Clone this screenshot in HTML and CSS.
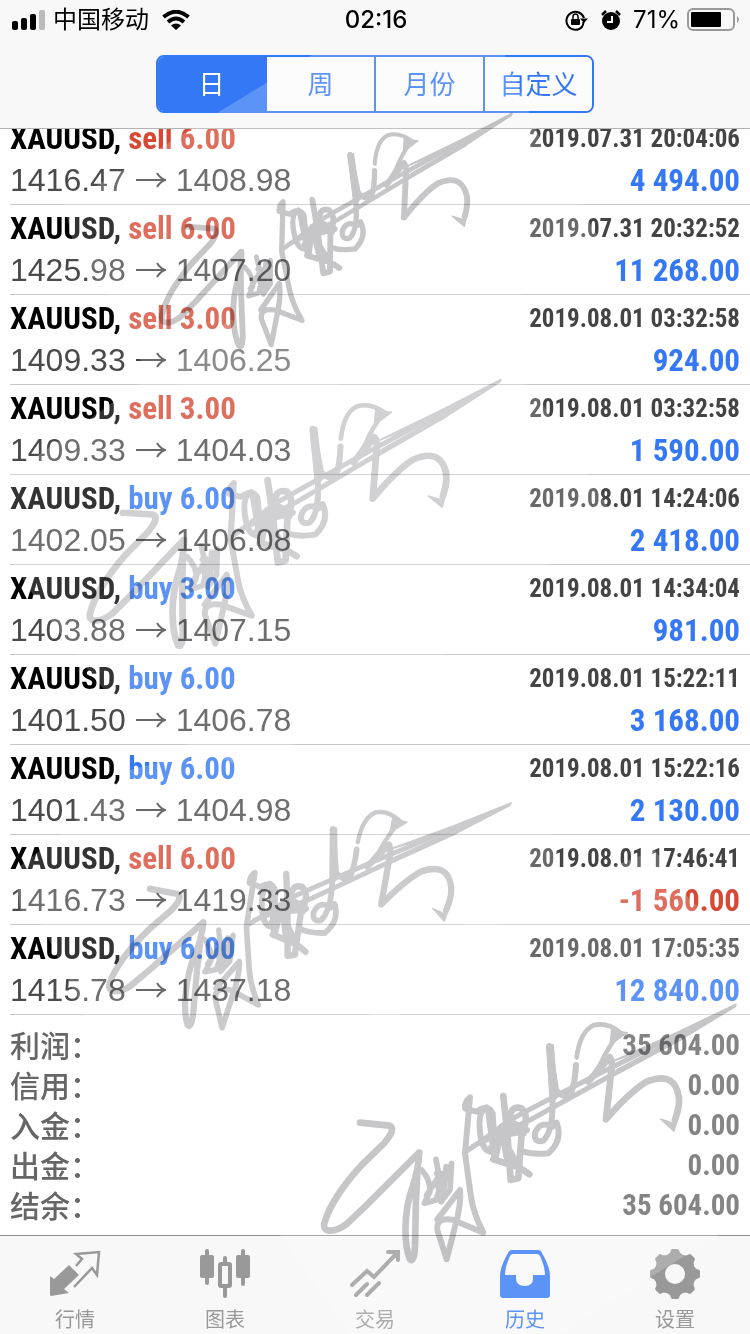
FILE: index.html
```html
<!DOCTYPE html>
<html lang="zh-CN">

<head>
    <meta charset="UTF-8">
    <meta name="viewport" content="width=device-width, initial-scale=1.0">
    <title>历史</title>
    <link rel="stylesheet" href="styles.css">
</head>

<body>
    <header class="header">
        <div class="status-bar">
            <div class="status-left">
                <svg class="signal" viewBox="0 0 34 20">
                    <rect x="0" y="11" width="6" height="9" rx="2" />
                    <rect x="9" y="8" width="6" height="12" rx="2" />
                    <rect x="18" y="4" width="6" height="16" rx="2" />
                    <rect x="27" y="0" width="6" height="20" rx="2" fill="#bbb" />
                </svg>
                <span>中国移动</span>
                <svg class="wifi" viewBox="0 0 28 20" fill="none" stroke="#000" stroke-width="4">
                    <path d="M1.500 7Q14-3.500 26.500 7" />
                    <path d="M6 12Q14 5 22 12" />
                    <path d="M9 15.500Q14 11.500 19 15.500L14 20Z" fill="#000" stroke="none" />
                </svg>
            </div>
            <span class="clock">02:16</span>
            <div class="status-right">
                <svg class="lock" viewBox="0 0 24 22">
                    <path d="M17 18A9 9 0 1 1 19 9" fill="none" stroke="#000" stroke-width="2" />
                    <path d="M15 9.500h8l-4 4.500z" />
                    <path d="M18.500 13a9 9 0 0 1-2 5.500" fill="none" stroke="#000" stroke-width="2" />
                    <rect x="6" y="10" width="9" height="6" rx="1" />
                    <path d="M8 10V7.500a2.500 2.500 0 0 1 5 0V10" fill="none" stroke="#000" stroke-width="1.500" />
                </svg>
                <svg class="alarm" viewBox="0 0 20 20">
                    <circle cx="10" cy="11" r="9" />
                    <path d="M1 5L5 1M19 5L15 1" stroke="#000" stroke-width="2.500" />
                    <path d="M11 6V12H6" fill="none" stroke="#f8f8f8" stroke-width="2" />
                </svg>
                <span>71%</span>
                <svg class="battery" viewBox="0 0 53 24">
                    <rect x="1" y="1" width="46" height="21" rx="5" fill="none" stroke="#999" stroke-width="2" />
                    <rect x="4" y="4" width="30" height="15" rx="1" />
                    <path d="M50 8Q54 11.500 50 15Z" fill="#999" />
                </svg>
            </div>
        </div>
        <div class="segments">
            <button class="segment active">日</button>
            <button class="segment">周</button>
            <button class="segment">月份</button>
            <button class="segment">自定义</button>
        </div>
    </header>

    <main class="history">
        <ul id="dealList" class="deal-list"></ul>

        <dl class="summary">
            <div><dt>利润：</dt><dd>35 604.00</dd></div>
            <div><dt>信用：</dt><dd>0.00</dd></div>
            <div><dt>入金：</dt><dd>0.00</dd></div>
            <div><dt>出金：</dt><dd>0.00</dd></div>
            <div><dt>结余：</dt><dd>35 604.00</dd></div>
        </dl>
    </main>

    <nav class="tab-bar">
        <a class="tab" href="#quotes">
            <svg viewBox="0 0 50 50">
                <path d="M0 28L4 31L19 17L29 27L14 41L19 45L1 48L0 47Z" />
                <path d="M26 18L32 11L26 6L49 4L47 27L42 20L24 39" fill="none" stroke="currentColor" stroke-width="2.500" />
            </svg>
            <span>行情</span>
        </a>
        <a class="tab" href="#charts">
            <svg viewBox="0 0 50 50">
                <rect x="0" y="7" width="14" height="23" rx="2" />
                <rect x="5" y="1" width="4" height="36" rx="2" />
                <rect x="36" y="7" width="14" height="23" rx="2" />
                <rect x="41" y="1" width="4" height="37" rx="2" />
                <rect x="23" y="8" width="4" height="8" rx="2" />
                <rect x="23" y="38" width="4" height="12" rx="2" />
                <rect x="20" y="16" width="10" height="22" rx="1" fill="none" stroke="currentColor" stroke-width="4" />
            </svg>
            <span>图表</span>
        </a>
        <a class="tab trade" href="#trade">
            <svg viewBox="0 0 50 50" fill="none" stroke="currentColor" stroke-width="4" stroke-linecap="round">
                <path d="M2 37L17 23L24 29L47 5M38 4H48V12M6 47L17 36M17 47L29 35" />
            </svg>
            <span>交易</span>
        </a>
        <a class="tab active" href="#history">
            <svg viewBox="0 0 50 50">
                <path fill-rule="evenodd" d="M12 2H38Q41 2 42 5Q50 19 50 28V47Q50 50 47 50H3Q0 50 0 47V28Q0 19 8 5Q9 2 12 2ZM13 6Q11 6 10 8Q5 19 5 27H16V30Q16 38 25 38Q33 38 33 30V27H45Q45 19 40 8Q39 6 37 6Z" />
            </svg>
            <span>历史</span>
        </a>
        <a class="tab" href="#settings">
            <svg viewBox="0 0 50 50">
                <circle cx="25" cy="26" r="15" fill="none" stroke="currentColor" stroke-width="10" />
                <g stroke="currentColor" stroke-width="3" stroke-linejoin="round">
                    <path id="tooth" d="M17 9L21 6L22.500 2.500H27.500L29 6L33 9Z" />
                    <use href="#tooth" transform="rotate(45 25 26)" />
                    <use href="#tooth" transform="rotate(90 25 26)" />
                    <use href="#tooth" transform="rotate(135 25 26)" />
                    <use href="#tooth" transform="rotate(180 25 26)" />
                    <use href="#tooth" transform="rotate(225 25 26)" />
                    <use href="#tooth" transform="rotate(270 25 26)" />
                    <use href="#tooth" transform="rotate(315 25 26)" />
                </g>
            </svg>
            <span>设置</span>
        </a>
    </nav>

    <!-- Pale plates under the signatures -->
    <svg class="overlay" viewBox="0 0 750 1334" fill="#fff" fill-opacity="0.200">
        <path d="M312 55L165 145L64 205L78 262L110 295L150 380L300 400L470 330L600 240L545 150L505 55Z" />
        <path d="M230 320L95 415L10 475L10 560L40 605L75 655L130 720L250 770L450 650L610 510L540 400L480 345Z" />
        <path d="M220 745L130 770L60 835L15 870L20 910L42 925L85 1015L150 1100L300 1080L450 980L560 860L520 745Z" />
        <path d="M750 950L690 900L655 850L450 930L290 1100L280 1235L350 1334H560L750 1215Z" />
    </svg>

    <!-- Signature watermark -->
    <svg class="overlay signatures" viewBox="0 0 750 1334">
        <defs>
            <g id="signature" fill="none" stroke="#c6c6c9" stroke-width="20" stroke-linecap="round" stroke-linejoin="round">
                <path d="M150 368L238 377Q260 386 222 430L155 495C95 560 55 625 43 670C36 700 75 698 110 672L165 620L325 460" />
                <path d="M328 458Q325 510 308 560C282 630 280 730 300 778Q312 790 315 740L318 600L323 500" />
                <path d="M335 510Q362 540 360 575L343 610L378 600L392 555L378 478M380 520L410 535L425 490L420 570L393 605L380 540M350 585L392 520M408 500L400 590" stroke-width="17" />
                <path d="M382 658L450 570Q455 610 435 680L410 778L382 690Q378 650 430 660L520 698Q490 640 483 590L465 460L480 292Q464 305 465 325L500 335Q535 310 548 340L555 455Q520 460 512 410Q500 335 530 322" stroke-width="18" />
                <path d="M468 455L530 412L600 360L660 328L840 235L1100 105M490 438L660 360L900 228L1110 115" stroke-width="15" />
                <path d="M535 330L555 480L575 380L590 470M545 440L610 370L650 390M550 478L620 500M555 410L630 395" />
                <path d="M580 288L592 400L602 540L625 535L635 400Q660 350 635 325Q605 315 600 350Q610 400 640 400M592 440L625 500L658 523" />
                <path d="M740 368Q760 420 715 460Q670 465 640 455M728 380Q690 360 675 400Q672 430 700 422Q728 395 728 310L718 138L738 270Q765 300 783 280Q795 250 798 195" stroke-width="18" />
                <path d="M712 140L728 136L740 290L724 310Z" fill="#c6c6c9" stroke-width="8" />
                <path d="M800 172Q810 95 850 76Q890 65 930 97Q895 140 870 195L835 245" stroke-width="14" />
                <path d="M835 245L875 200L900 172Q910 190 903 220L888 358Q960 275 1010 245Q1085 215 1103 275Q1115 305 1095 360" />
                <path d="M905 185L1100 98L1278 13L1275 20L1110 120L920 210L1110 108Z" fill="#c6c6c9" stroke-width="5" />
                <path d="M905 90L952 98L900 135Z" fill="#c6c6c9" stroke-width="4" />
                <path d="M1052 357L1090 370L1104 352L1092 394Z" fill="#c6c6c9" stroke-width="4" />
            </g>
        </defs>
        <use href="#signature" transform="matrix(.2933 -.0083 .018 .2933 137 120)" />
        <use href="#signature" transform="matrix(.3387 -.0147 .011 .3287 68 394)" opacity="0.800" />
        <use href="#signature" transform="matrix(.3133 .0257 -.0223 .323 111 766)" opacity="0.900" />
        <use href="#signature" transform="matrix(.3333 0 0 .3333 310 1000)" />
    </svg>

    <script>
        const deals = [
            { side: 'sell', volume: '6.00', open: '1416.47', close: '1408.98', time: '2019.07.31 20:04:06', profit: '4 494.00' },
            { side: 'sell', volume: '6.00', open: '1425.98', close: '1407.20', time: '2019.07.31 20:32:52', profit: '11 268.00' },
            { side: 'sell', volume: '3.00', open: '1409.33', close: '1406.25', time: '2019.08.01 03:32:58', profit: '924.00' },
            { side: 'sell', volume: '3.00', open: '1409.33', close: '1404.03', time: '2019.08.01 03:32:58', profit: '1 590.00' },
            { side: 'buy', volume: '6.00', open: '1402.05', close: '1406.08', time: '2019.08.01 14:24:06', profit: '2 418.00' },
            { side: 'buy', volume: '3.00', open: '1403.88', close: '1407.15', time: '2019.08.01 14:34:04', profit: '981.00' },
            { side: 'buy', volume: '6.00', open: '1401.50', close: '1406.78', time: '2019.08.01 15:22:11', profit: '3 168.00' },
            { side: 'buy', volume: '6.00', open: '1401.43', close: '1404.98', time: '2019.08.01 15:22:16', profit: '2 130.00' },
            { side: 'sell', volume: '6.00', open: '1416.73', close: '1419.33', time: '2019.08.01 17:46:41', profit: '-1 560.00' },
            { side: 'buy', volume: '6.00', open: '1415.78', close: '1437.18', time: '2019.08.01 17:05:35', profit: '12 840.00' }
        ];

        document.getElementById('dealList').innerHTML = deals.map(deal => `
            <li class="deal">
                <div class="deal-row">
                    <span class="symbol">XAUUSD, <span class="${deal.side}">${deal.side} ${deal.volume}</span></span>
                    <time class="time">${deal.time}</time>
                </div>
                <div class="deal-row">
                    <span class="prices">
                        <span>${deal.open}</span>
                        <svg class="arrow" viewBox="0 0 30 16"><path d="M0 8H29M21 1Q24 6 29 8Q24 10 21 15" /></svg>
                        <span>${deal.close}</span>
                    </span>
                    <span class="profit ${deal.profit.startsWith('-') ? 'loss' : ''}">${deal.profit}</span>
                </div>
            </li>`).join('');
    </script>
</body>

</html>
```
FILE: styles.css
```css
* {
    box-sizing: border-box;
}

body {
    position: relative;
    display: flex;
    flex-direction: column;
    height: 100vh;
    margin: 0;
    overflow: hidden;
    background: #fff;
    font-family: Inter, "Noto Sans CJK SC", sans-serif;
}

.header {
    flex: none;
    padding-bottom: 15px;
    background: #f8f8f8;
    border-bottom: 1px solid #b2b2b2;
}

/* Status bar */
.status-bar {
    display: grid;
    grid-template-columns: 1fr auto 1fr;
    align-items: center;
    height: 40px;
    padding: 0 10px 0 12px;
    font-size: 24px;
    line-height: 40px;
}

.status-left,
.status-right {
    display: flex;
    align-items: center;
    gap: 7px;
}

.status-right {
    justify-content: flex-end;
}

.clock {
    font-weight: 500;
}

.signal {
    width: 34px;
    height: 20px;
}

.wifi {
    width: 28px;
    height: 20px;
    margin-left: 6px;
}

.lock {
    width: 24px;
    height: 22px;
}

.alarm {
    width: 20px;
    height: 20px;
    margin: 0 5px;
}

.battery {
    width: 53px;
    height: 24px;
}

/* Period switch */
.segments {
    display: flex;
    width: 58.4%;
    height: 58px;
    margin: 15px auto 0;
    border: 2px solid #3478f6;
    border-radius: 8px;
    overflow: hidden;
}

.segment {
    flex: 1;
    padding: 0 0 4px;
    border: none;
    border-left: 2px solid #3478f6;
    background: #fcfcfc;
    color: #3478f6;
    font-family: inherit;
    font-size: 26px;
    cursor: pointer;
}

.segment:first-child {
    border-left: none;
}

.segment.active {
    background: #3478f6;
    color: #fff;
}

/* Deals */
.history {
    flex: 1;
    min-height: 0;
    overflow: hidden;
}

.deal-list {
    list-style: none;
    margin: -14px 0 0 10px;
    padding: 0;
}

.deal {
    height: 90px;
    padding: 2px 10px 0 0;
    border-bottom: 1px solid #c8c8c8;
}

.deal-row {
    display: flex;
    justify-content: space-between;
    align-items: center;
    height: 42px;
    white-space: nowrap;
}

.symbol,
.time,
.profit,
.summary dd {
    font-family: "Roboto Condensed", "Liberation Sans", sans-serif;
    font-weight: bold;
}

.symbol {
    color: #000;
    font-size: 31px;
}

.buy {
    color: #3478f6;
}

.sell {
    color: #d64a35;
}

.time {
    color: #444;
    font-size: 25px;
}

.prices {
    display: flex;
    align-items: center;
    gap: 10px;
    color: #4a4a4a;
    font-family: "Liberation Sans", sans-serif;
    font-size: 32px;
}

.arrow {
    width: 30px;
    height: 16px;
    fill: none;
    stroke: #444;
    stroke-width: 2;
}

.profit {
    color: #3478f6;
    font-size: 31px;
}

.loss {
    color: #d64a35;
}

/* Totals */
.summary {
    margin: 10px 10px 0;
    color: #666;
}

.summary div {
    display: flex;
    justify-content: space-between;
    height: 40px;
    line-height: 40px;
}

.summary dt {
    font-family: "Noto Sans CJK SC", sans-serif;
    font-size: 30px;
    font-weight: 500;
    line-height: 38px;
}

.summary dd {
    margin: 0;
    font-size: 29px;
}

/* Bottom tabs */
.tab-bar {
    display: flex;
    flex: none;
    height: 99px;
    padding-top: 12px;
    background: #f8f8f8;
    border-top: 1px solid #909090;
}

.tab {
    display: flex;
    flex: 1;
    flex-direction: column;
    align-items: center;
    gap: 8px;
    color: #999;
    font-size: 20px;
    line-height: 28px;
    text-decoration: none;
}

.tab svg {
    width: 50px;
    height: 50px;
    overflow: visible;
}

.tab svg:not([fill]) {
    fill: currentColor;
}

.tab.active {
    color: #3478f6;
}

.overlay {
    position: absolute;
    top: 0;
    left: 0;
    width: 100%;
    pointer-events: none;
}

.signatures {
    mix-blend-mode: multiply;
}
```
